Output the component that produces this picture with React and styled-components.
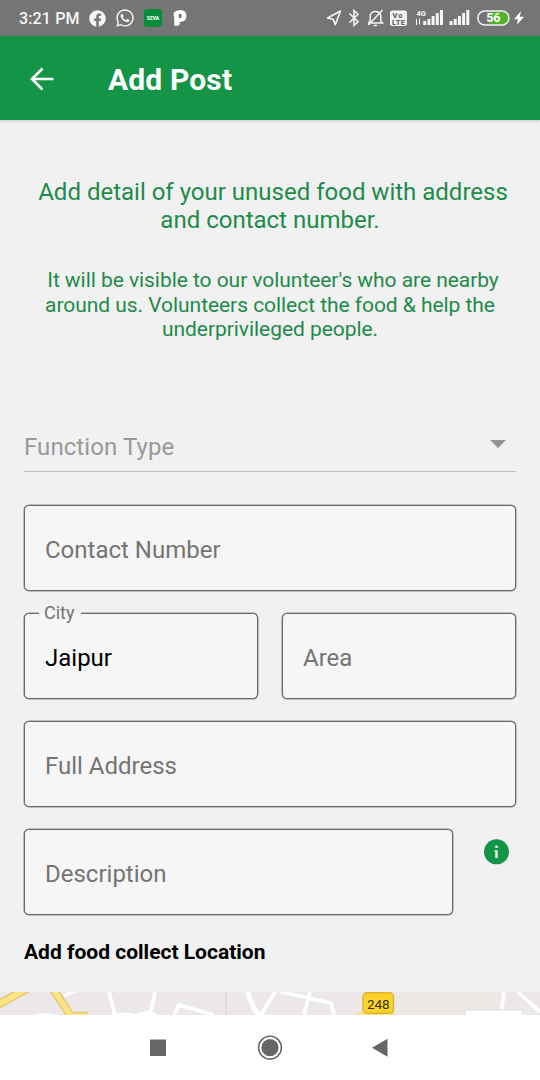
import React from "react";
import styled, { createGlobalStyle } from "styled-components";
import { FaFacebook, FaWhatsapp } from "react-icons/fa";

const GlobalStyle = createGlobalStyle`
  body {
    margin: 0;
    background: #f1f1f1;
    font-family: Roboto, "Liberation Sans", sans-serif;
  }
`;

const Screen = styled.div`
  width: 540px;
  height: 1080px;
  overflow: hidden;

  display: flex;
  flex-direction: column;

  background: #f1f1f1;
`;

const StatusBar = styled.div`
  height: 36px;
  flex: none;
  padding: 0 16px 0 19px;
  box-sizing: border-box;

  display: flex;
  align-items: center;
  justify-content: space-between;

  background: #757575;
  color: #f5f5f5;
`;

const StatusGroup = styled.div`
  height: 36px;

  display: flex;
  align-items: center;
`;

const Clock = styled.span`
  width: 60px;
  margin-right: 10px;

  font-size: 16px;
  font-weight: 500;
  letter-spacing: 0.15px;
  white-space: nowrap;
`;

const StatusIcon = styled.svg`
  width: ${({ $width }) => $width}px;
  height: 20px;
  margin-left: ${({ $gap }) => $gap || 0}px;

  display: block;
  flex: none;
  overflow: visible;
`;

const FacebookIcon = styled(FaFacebook)`
  width: 17px;
  height: 17px;
`;

const WhatsappIcon = styled(FaWhatsapp)`
  width: 20px;
  height: 20px;
  margin-left: 9px;
`;

const AppBadge = styled.div`
  width: 18px;
  height: 18px;
  margin-left: 9px;
  border-radius: 3px;

  display: flex;
  align-items: center;
  justify-content: center;

  background: #0b8c3b;
  color: #e9fff0;
  font-size: 5px;
  font-weight: 900;
  line-height: 14px;
`;

const Header = styled.header`
  height: 84px;
  flex: none;
  padding-left: 28px;
  box-sizing: border-box;

  display: flex;
  align-items: center;
  gap: 52px;

  background: #149447;
  box-shadow: 0 1px 3px rgba(0, 0, 0, 0.18);
  color: #fff;
  z-index: 1;
`;

const BackArrow = styled.svg`
  width: 28px;
  height: 28px;
`;

const Title = styled.h1`
  margin: 4px 0 0;

  font-size: 30px;
  font-weight: 700;
  line-height: 36px;
  letter-spacing: 0.15px;
`;

const Content = styled.main`
  height: 872px;
  flex: none;
  padding: 58px 24px 0;
  box-sizing: border-box;
`;

const Intro = styled.p`
  margin: 0;

  color: #1d8b49;
  font-size: 24px;
  line-height: 28px;
  text-align: center;
  white-space: nowrap;
`;

const IntroNote = styled(Intro)`
  margin-top: 34px;

  font-size: 21px;
  line-height: 24.5px;
  letter-spacing: -0.05px;
`;

const FirstLine = styled.span`
  padding-left: 6px;
`;

const Select = styled.div`
  height: 50px;
  margin-top: 80px;
  padding: 1px 10px 0 0;
  box-sizing: border-box;
  border-bottom: 1px solid #bdbdbd;

  display: flex;
  align-items: center;
  justify-content: space-between;

  color: #999;
  font-size: 24px;
  letter-spacing: 0.08px;
`;

const Caret = styled.svg`
  width: 16px;
  height: 8px;
  margin-bottom: 5px;
`;

const Form = styled.div`
  margin-top: 33px;

  display: flex;
  flex-direction: column;
  gap: 22px;
`;

const Row = styled.div`
  display: flex;
  align-items: flex-start;
  gap: ${({ $gap }) => $gap}px;
`;

const FieldBox = styled.div`
  position: relative;
  width: ${({ $width }) => ($width ? `${$width}px` : "100%")};
  height: 86px;
  padding: 5px 20px 0;
  box-sizing: border-box;
  border: 1px solid #6c6c6c;
  box-shadow: 0 0 0 0.5px #8a8a8a;
  border-radius: 5px;

  display: flex;
  align-items: center;

  background: #f6f6f6;
  color: ${({ $filled }) => ($filled ? "#000" : "#747474")};
  font-size: 24px;
`;

// sits on the top outline and breaks it
const FloatingLabel = styled.span`
  position: absolute;
  top: -11px;
  left: 14px;
  padding: 0 6px 0 5px;

  background: linear-gradient(#f1f1f1 50%, #f6f6f6 50%);
  color: #747474;
  font-size: 18px;
  line-height: 20px;
`;

const InfoIcon = styled.svg`
  width: 26px;
  height: 26px;
  margin-top: 10px;
`;

const SectionTitle = styled.h2`
  margin: 25px 0 0;

  color: #000;
  font-size: 21px;
  font-weight: 700;
  line-height: 25px;
`;

const MapStrip = styled.svg`
  width: 540px;
  height: 23px;
  flex: none;
  display: block;
`;

const NavBar = styled.nav`
  height: 65px;
  flex: none;

  display: flex;
  align-items: center;
  justify-content: center;
  gap: 86px;

  background: #fff;
`;

const NavIcon = styled.svg`
  width: 26px;
  height: 26px;
  display: block;
`;

const signalBars = [4, 6, 9, 12, 15];

function Field({ label, value, width }) {
  return (
    <FieldBox $width={width} $filled={!!value}>
      {value && <FloatingLabel>{label}</FloatingLabel>}
      {value || label}
    </FieldBox>
  );
}

function Bars({ x }) {
  return signalBars.map((height, i) => (
    <rect key={height} x={x + i * 4.2} y={17 - height} width="3" height={height} />
  ));
}

export default function App() {
  return (
    <Screen>
      <GlobalStyle />

      <StatusBar>
        <StatusGroup>
          <Clock>3:21 PM</Clock>
          <FacebookIcon />
          <WhatsappIcon />
          <AppBadge>SEVA</AppBadge>
          <StatusIcon $width={14} $gap={11} viewBox="0 0 14 20" fill="#fff">
            <path
              fillRule="evenodd"
              d="M0.8 4.5Q3.5 2 7.5 2Q13.4 2 13.4 8Q13.4 13.8 6.8 14V16Q6.2 17.8 4 17.8H1.3V8.5H0.6ZM5.8 5.8V10.2H7.2Q8.8 9.8 8.8 7.8Q8.8 5.8 7 5.8Z"
            />
          </StatusIcon>
        </StatusGroup>

        <StatusGroup>
          <StatusIcon $width={16} viewBox="0 0 16 20" fill="none">
            <path
              d="M14.5 3L1.5 10L7.2 11.2L9.3 16.8Z"
              stroke="#f5f5f5"
              strokeWidth="1.6"
              strokeLinejoin="round"
            />
          </StatusIcon>
          <StatusIcon $width={12} $gap={6} viewBox="0 0 12 20" fill="none">
            <path
              d="M1.5 5.5L10 13.8L6 17.5V2.5L10 6.2L1.5 14.5"
              stroke="#f5f5f5"
              strokeWidth="1.6"
            />
          </StatusIcon>
          <StatusIcon $width={17} $gap={7} viewBox="0 0 17 20" fill="none">
            <path
              d="M1 15H15.5L13.8 13V8.3C13.8 5.4 11.5 3.5 8.5 3.5S3.2 5.4 3.2 8.3V13L1 15M6.8 17.5H10M15.5 2L1.5 17"
              stroke="#f5f5f5"
              strokeWidth="1.5"
            />
          </StatusIcon>
          <StatusIcon $width={17} $gap={6} viewBox="0 0 17 20">
            <rect y="2.5" width="17" height="15.5" rx="2.5" fill="#f5f5f5" />
            <text
              x="2.5"
              y="9.6"
              fontSize="7.5"
              fontWeight="900"
              textLength="10"
              fill="#666"
            >
              Vo
            </text>
            <text
              x="2"
              y="16.6"
              fontSize="7.5"
              fontWeight="900"
              textLength="13"
              fill="#666"
            >
              LTE
            </text>
          </StatusIcon>
          <StatusIcon $width={28} $gap={8} viewBox="0 0 28 20" fill="#f5f5f5">
            <text x="1.5" y="7.5" fontSize="7.5" fontWeight="700">
              4G
            </text>
            <path d="M0.5 12L2 10.5V17H1V12ZM4 10.5H5V17L3.5 15.5H4Z" />
            <Bars x={8.2} />
          </StatusIcon>
          <StatusIcon $width={21} $gap={6} viewBox="0 0 21 20" fill="#f5f5f5">
            <Bars x={0.5} />
          </StatusIcon>
          <StatusIcon $width={33} $gap={7} viewBox="0 0 33 20">
            <path
              d="M13 4H25.5A6 6 0 0 1 25.5 16H13Z"
              fill="#4db52c"
            />
            <rect
              x="0.9"
              y="3"
              width="31"
              height="14"
              rx="6.8"
              fill="none"
              stroke="#f5f5f5"
              strokeWidth="1.5"
            />
            <text
              x="16.3"
              y="14.4"
              fontSize="12.5"
              fontWeight="700"
              textAnchor="middle"
              fill="#fff"
            >
              56
            </text>
          </StatusIcon>
          <StatusIcon $width={10} $gap={4} viewBox="0 0 10 20" fill="#fff">
            <path d="M7 3L0 11.2H4L2.8 17L10 8.8H5.8Z" />
          </StatusIcon>
        </StatusGroup>
      </StatusBar>

      <Header>
        <BackArrow viewBox="0 0 28 28" fill="none">
          <path
            d="M25.5 15H4M14.5 4.5L4 15L14.5 25.5"
            stroke="#fff"
            strokeWidth="2.6"
          />
        </BackArrow>
        <Title>Add Post</Title>
      </Header>

      <Content>
        <Intro>
          <FirstLine>Add detail of your unused food with address</FirstLine>
          <br />
          and contact number.
        </Intro>
        <IntroNote>
          <FirstLine>It will be visible to our volunteer's who are nearby</FirstLine>
          <br />
          around us. Volunteers collect the food &amp; help the
          <br />
          underprivileged people.
        </IntroNote>

        <Select>
          Function Type
          <Caret viewBox="0 0 16 8">
            <path d="M0 0H16L8 8Z" fill="#929292" />
          </Caret>
        </Select>

        <Form>
          <Field label="Contact Number" />
          <Row $gap={24}>
            <Field label="City" value="Jaipur" />
            <Field label="Area" />
          </Row>
          <Field label="Full Address" />
          <Row $gap={31}>
            <Field label="Description" width={429} />
            <InfoIcon viewBox="0 0 26 26">
              <circle cx="12.5" cy="12.8" r="12.5" fill="#149447" />
              <path
                d="M11.3 6.6H13.7V9.1H11.3ZM10.6 11.2H13.7V19H11.3V13H10.6Z"
                fill="#e6faec"
              />
            </InfoIcon>
          </Row>
        </Form>

        <SectionTitle>Add food collect Location</SectionTitle>
      </Content>

      <MapStrip viewBox="0 0 540 23" fill="none">
        <rect width="540" height="23" fill="#ece8ea" />
        <path d="M398 0H502L490 23H398Z" fill="#edeae6" />
        <path
          d="M424 0L408 23M456 0L440 23M492 0L474 23"
          stroke="#f0e8e4"
          strokeWidth="8"
        />
        <path d="M226 0V23" stroke="#d7d3d7" strokeWidth="1.2" />
        <path
          d="M64 4L76 -2M109 0L115 23M155 0L151 19M174 23L179 13L214 23M275 0L261 23M281 0L331 11L334 23M310 0L304 23M504 0L501 23M518 0L540 20"
          stroke="#fff"
          strokeWidth="3.6"
        />
        <path d="M247 -1L255 19L264 25" stroke="#fff" strokeWidth="5" />
        <path d="M34 23Q44 19 57 23M110 23Q124 19 135 22L150 18L158 23" fill="#fff" />
        <path d="M-6 15L30 -5M51 -6L71 24H88" stroke="#e4c877" strokeWidth="8.5" />
        <path d="M-6 15L30 -5M51 -6L71 24H88" stroke="#fde485" strokeWidth="5.5" />
        <path d="M355 23L366 17H390L396 23Z" fill="#fbe27c" />
        <rect
          x="363"
          y="0.7"
          width="30.5"
          height="20.5"
          rx="4"
          fill="#fbd32d"
          stroke="#dfb22e"
          strokeWidth="1.4"
        />
        <text
          x="378.3"
          y="16.6"
          fontSize="13.5"
          textAnchor="middle"
          fill="#3d300a"
        >
          248
        </text>
        <rect x="465" y="18" width="57" height="7" fill="#fff" stroke="#ddd" />
      </MapStrip>

      <NavBar>
        <NavIcon viewBox="0 0 26 26">
          <rect x="5" y="4.5" width="16" height="16.5" fill="#666" />
        </NavIcon>
        <NavIcon viewBox="0 0 26 26">
          <circle
            cx="13"
            cy="12.7"
            r="11.4"
            fill="none"
            stroke="#666"
            strokeWidth="1.6"
          />
          <circle cx="13" cy="12.7" r="8.6" fill="#666" />
        </NavIcon>
        <NavIcon viewBox="0 0 26 26">
          <path d="M3 12.7L18.5 3.7V21.7Z" fill="#666" />
        </NavIcon>
      </NavBar>
    </Screen>
  );
}
